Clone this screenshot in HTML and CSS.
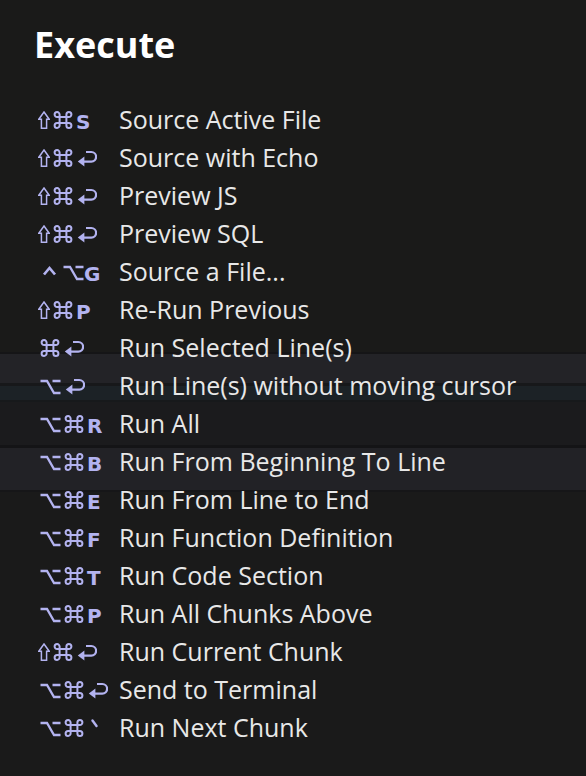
FILE: index.html
```html
<!DOCTYPE html>
<html>
<head>
<meta charset="utf-8">
<link rel="stylesheet" href="styles.css">
</head>
<body>
<svg class="defs" width="0" height="0" aria-hidden="true">
  <defs>
    <symbol id="i-shift" viewBox="0 0 12 18"><path d="M6 1 L11.2 8.2 H8.6 V17.2 H3.4 V8.2 H0.8 Z" fill="none" stroke="currentColor" stroke-width="1.5"/></symbol>
    <symbol id="i-cmd" viewBox="0 0 20 18"><path d="M6.6 3.6 A2.5 2.5 0 1 0 4.1 6.1 H15.9 A2.5 2.5 0 1 0 13.4 3.6 V14.4 A2.5 2.5 0 1 0 15.9 11.9 H4.1 A2.5 2.5 0 1 0 6.6 14.4 Z" fill="none" stroke="currentColor" stroke-width="2"/></symbol>
    <symbol id="i-ret" viewBox="0 0 20 17"><path d="M9 2 H14.3 A4.8 4.8 0 0 1 14.3 11.6 H6" fill="none" stroke="currentColor" stroke-width="2.2"/><path d="M0.8 11.6 L7.4 6.6 V16.6 Z" fill="currentColor"/></symbol>
    <symbol id="i-opt" viewBox="0 0 21 16"><path d="M0.5 2 H7 L14 14 H20.5 M12.5 2 H20.5" fill="none" stroke="currentColor" stroke-width="2.3"/></symbol>
    <symbol id="i-ctrl" viewBox="0 0 15 16"><path d="M2 9.5 L7.5 3 L13 9.5" fill="none" stroke="currentColor" stroke-width="2.7"/></symbol>
    <symbol id="i-tick" viewBox="0 0 7 18"><path d="M1.5 1.5 L5.5 7" fill="none" stroke="currentColor" stroke-width="2.4" stroke-linecap="round"/></symbol>
  </defs>
</svg>
<main class="panel">
  <h1 class="title">Execute</h1>
  <ul class="list">
    <li class="row"><span class="keys"><svg class="ic shift"><use href="#i-shift"/></svg><svg class="ic cmd"><use href="#i-cmd"/></svg><span class="ltr">S</span></span><span class="label">Source Active File</span></li>
    <li class="row"><span class="keys"><svg class="ic shift"><use href="#i-shift"/></svg><svg class="ic cmd"><use href="#i-cmd"/></svg><svg class="ic ret"><use href="#i-ret"/></svg></span><span class="label">Source with Echo</span></li>
    <li class="row"><span class="keys"><svg class="ic shift"><use href="#i-shift"/></svg><svg class="ic cmd"><use href="#i-cmd"/></svg><svg class="ic ret"><use href="#i-ret"/></svg></span><span class="label">Preview JS</span></li>
    <li class="row"><span class="keys"><svg class="ic shift"><use href="#i-shift"/></svg><svg class="ic cmd"><use href="#i-cmd"/></svg><svg class="ic ret"><use href="#i-ret"/></svg></span><span class="label">Preview SQL</span></li>
    <li class="row"><span class="keys"><svg class="ic ctrl"><use href="#i-ctrl"/></svg><svg class="ic opt"><use href="#i-opt"/></svg><span class="ltr tight">G</span></span><span class="label">Source a File...</span></li>
    <li class="row"><span class="keys"><svg class="ic shift"><use href="#i-shift"/></svg><svg class="ic cmd"><use href="#i-cmd"/></svg><span class="ltr">P</span></span><span class="label">Re-Run Previous</span></li>
    <li class="row"><span class="keys"><svg class="ic cmd"><use href="#i-cmd"/></svg><svg class="ic ret"><use href="#i-ret"/></svg></span><span class="label">Run Selected Line(s)</span></li>
    <li class="row"><span class="keys"><svg class="ic opt"><use href="#i-opt"/></svg><svg class="ic ret"><use href="#i-ret"/></svg></span><span class="label">Run Line(s) without moving cursor</span></li>
    <li class="row"><span class="keys"><svg class="ic opt"><use href="#i-opt"/></svg><svg class="ic cmd"><use href="#i-cmd"/></svg><span class="ltr">R</span></span><span class="label">Run All</span></li>
    <li class="row"><span class="keys"><svg class="ic opt"><use href="#i-opt"/></svg><svg class="ic cmd"><use href="#i-cmd"/></svg><span class="ltr">B</span></span><span class="label">Run From Beginning To Line</span></li>
    <li class="row"><span class="keys"><svg class="ic opt"><use href="#i-opt"/></svg><svg class="ic cmd"><use href="#i-cmd"/></svg><span class="ltr">E</span></span><span class="label">Run From Line to End</span></li>
    <li class="row"><span class="keys"><svg class="ic opt"><use href="#i-opt"/></svg><svg class="ic cmd"><use href="#i-cmd"/></svg><span class="ltr">F</span></span><span class="label">Run Function Definition</span></li>
    <li class="row"><span class="keys"><svg class="ic opt"><use href="#i-opt"/></svg><svg class="ic cmd"><use href="#i-cmd"/></svg><span class="ltr">T</span></span><span class="label">Run Code Section</span></li>
    <li class="row"><span class="keys"><svg class="ic opt"><use href="#i-opt"/></svg><svg class="ic cmd"><use href="#i-cmd"/></svg><span class="ltr">P</span></span><span class="label">Run All Chunks Above</span></li>
    <li class="row"><span class="keys"><svg class="ic shift"><use href="#i-shift"/></svg><svg class="ic cmd"><use href="#i-cmd"/></svg><svg class="ic ret"><use href="#i-ret"/></svg></span><span class="label">Run Current Chunk</span></li>
    <li class="row"><span class="keys"><svg class="ic opt"><use href="#i-opt"/></svg><svg class="ic cmd"><use href="#i-cmd"/></svg><svg class="ic ret"><use href="#i-ret"/></svg></span><span class="label">Send to Terminal</span></li>
    <li class="row"><span class="keys"><svg class="ic opt"><use href="#i-opt"/></svg><svg class="ic cmd"><use href="#i-cmd"/></svg><svg class="ic tick"><use href="#i-tick"/></svg></span><span class="label">Run Next Chunk</span></li>
  </ul>
</main>
</body>
</html>
```

FILE: styles.css
```css
html, body {
  margin: 0;
  padding: 0;
}
body {
  width: 586px;
  height: 776px;
  overflow: hidden;
  background: linear-gradient(to bottom,
    #1a1a19 0px, #1a1a19 352px,
    #151517 352px, #151517 354px,
    #232327 354px, #232327 383px,
    #17181a 383px, #17181a 386px,
    #1c2226 386px, #1c2226 400px,
    #17191b 400px, #17191b 402px,
    #1b1b1d 402px, #1b1b1d 445px,
    #141416 445px, #141416 448px,
    #222226 448px, #222226 490px,
    #161618 490px, #161618 492px,
    #1a1a1a 492px, #1a1a1a 776px);
  font-family: "Open Sans", "DejaVu Sans", sans-serif;
}
.defs {
  position: absolute;
  width: 0;
  height: 0;
  overflow: hidden;
}
.panel {
  padding: 20px 0 0 34px;
}
.title {
  margin: 0;
  font-size: 36px;
  line-height: 49px;
  font-weight: 700;
  color: #ffffff;
}
.list {
  list-style: none;
  margin: 31px 0 0 0;
  padding: 0;
}
.row {
  display: flex;
  align-items: baseline;
  height: 38px;
  line-height: 38px;
}
.keys {
  box-sizing: border-box;
  width: 85px;
  padding-left: 6px;
  flex: none;
  display: flex;
  align-items: baseline;
  gap: 3px;
  color: #b3b3f0;
}
.ic {
  display: block;
  flex: none;
}
.shift {
  width: 12px;
  height: 18px;
  margin-left: -2px;
}
.cmd {
  width: 20px;
  height: 18px;
}
.ret {
  width: 20px;
  height: 17px;
  margin-bottom: 1px;
  margin-left: 1px;
}
.opt {
  width: 21px;
  height: 16px;
  margin-bottom: 1px;
}
.ctrl {
  width: 15px;
  height: 16px;
  margin-left: 2px;
  margin-right: 3px;
}
.tick {
  width: 7px;
  height: 18px;
  margin-left: 4px;
}
.ltr {
  font-family: "DejaVu Sans", sans-serif;
  font-weight: 700;
  font-size: 20px;
  line-height: 38px;
}
.tight {
  margin-left: -3px;
}
.label {
  color: #e8e8e8;
  font-size: 25px;
  white-space: nowrap;
}
```
